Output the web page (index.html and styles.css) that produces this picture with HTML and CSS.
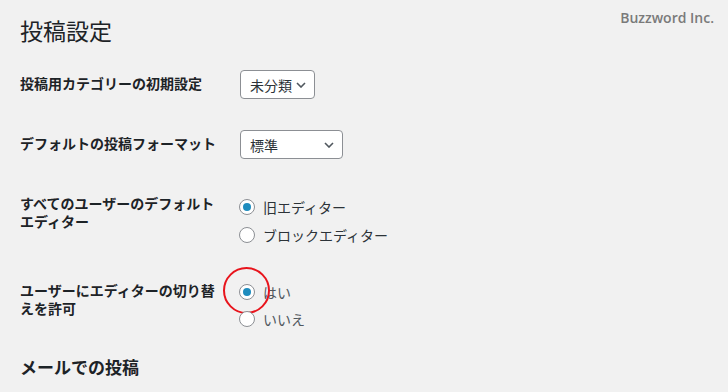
FILE: index.html
```html
<!DOCTYPE html>
<html lang="ja">
<head>
<meta charset="utf-8">
<title>投稿設定</title>
<link rel="stylesheet" href="styles.css">
</head>
<body>
<div class="brand">Buzzword Inc.</div>
<div class="wrap">
  <h1 class="title">投稿設定</h1>
  <div class="form">
    <div class="row">
      <div class="th">投稿用カテゴリーの初期設定</div>
      <div class="td">
        <div class="select sel-cat"><span>未分類</span><svg class="chev" width="10" height="6" viewBox="0 0 10 6"><path d="M1 1 L5 5 L9 1" fill="none" stroke="#50575e" stroke-width="1.6"/></svg></div>
      </div>
    </div>
    <div class="row">
      <div class="th">デフォルトの投稿フォーマット</div>
      <div class="td">
        <div class="select sel-fmt"><span>標準</span><svg class="chev" width="10" height="6" viewBox="0 0 10 6"><path d="M1 1 L5 5 L9 1" fill="none" stroke="#50575e" stroke-width="1.6"/></svg></div>
      </div>
    </div>
    <div class="row">
      <div class="th">すべてのユーザーのデフォルト<br>エディター</div>
      <div class="td radios">
        <div class="opt"><span class="radio checked"></span><span class="otext">旧エディター</span></div>
        <div class="opt"><span class="radio"></span><span class="otext">ブロックエディター</span></div>
      </div>
    </div>
    <div class="row">
      <div class="th">ユーザーにエディターの切り替<br>えを許可</div>
      <div class="td radios radios-tight">
        <div class="opt"><span class="radio checked"><span class="mark"></span></span><span class="otext light">はい</span></div>
        <div class="opt"><span class="radio"></span><span class="otext light">いいえ</span></div>
      </div>
    </div>
  </div>
  <h2 class="sub">メールでの投稿</h2>
</div>
</body>
</html>
```
FILE: styles.css
```css
html, body {
  margin: 0;
  padding: 0;
}
body {
  background: #f1f1f1;
  font-family: "Noto Sans CJK JP", "Noto Sans", sans-serif;
  font-size: 14px;
  color: #1d2327;
  height: 392px;
  overflow: hidden;
  position: relative;
}
.brand {
  position: absolute;
  top: 8px;
  right: 14px;
  font-family: "Open Sans", "Noto Sans", sans-serif;
  font-weight: 600;
  font-size: 14px;
  line-height: 20px;
  color: #7a7a7a;
}
.wrap {
  padding: 15px 20px 0;
}
.title {
  margin: 0 0 10px;
  font-size: 23px;
  font-weight: 400;
  line-height: 30px;
  color: #1d2327;
}
.row {
  display: grid;
  grid-template-columns: 220px 1fr;
}
.th {
  padding: 19px 0 20px;
  font-weight: 700;
  line-height: 18px;
  color: #1d2327;
}
.td {
  padding: 15px 0 16px;
}
.select {
  box-sizing: border-box;
  height: 29px;
  display: flex;
  align-items: center;
  justify-content: space-between;
  padding: 0 8px 0 9px;
  background: #fff;
  border: 1px solid #8c8f94;
  border-radius: 4px;
  color: #2c3338;
  line-height: 20px;
}
.sel-cat { width: 75px; }
.sel-fmt { width: 103px; }
.chev { display: block; }
.radios {
  padding: 18px 0 13px;
}
.radios-tight {
  padding: 16px 0 0;
}
.opt {
  display: flex;
  align-items: center;
  height: 28px;
}
.radios-tight .opt {
  height: 27px;
}
.radio {
  position: relative;
  box-sizing: border-box;
  width: 16px;
  height: 16px;
  margin-left: -1px;
  margin-right: 8px;
  border: 1px solid #8c8f94;
  border-radius: 50%;
  background: #fff;
  flex: none;
}
.radio.checked::before {
  content: "";
  position: absolute;
  left: 3px;
  top: 3px;
  width: 8px;
  height: 8px;
  border-radius: 50%;
  background: #1e8cbe;
}
.mark {
  position: absolute;
  left: -17px;
  top: -18px;
  width: 47px;
  height: 47px;
  box-sizing: border-box;
  border: 2px solid #e8141c;
  border-radius: 50%;
}
.otext {
  color: #2c3338;
  line-height: 20px;
}
.otext.light {
  color: #50575e;
}
.sub {
  margin: 19px 0 0;
  font-size: 17px;
  font-weight: 700;
  line-height: 22px;
  color: #1d2327;
}
```
